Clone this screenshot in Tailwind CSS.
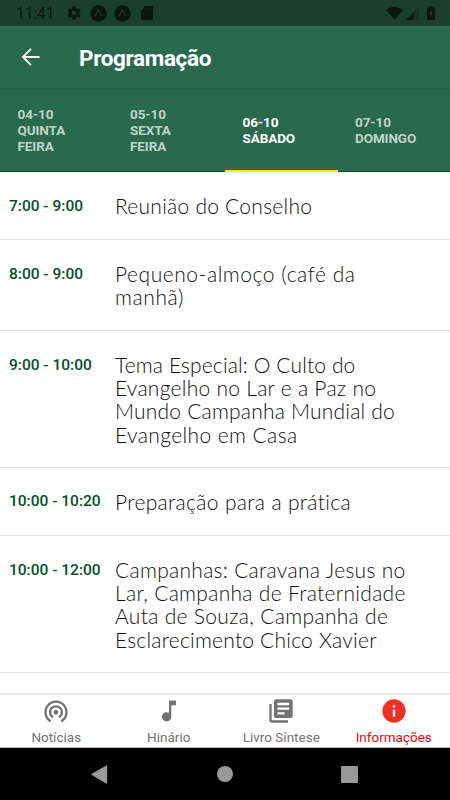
<!DOCTYPE html>
<html lang="pt">
    <head>
        <meta charset="UTF-8">
        <meta name="viewport" content="width=device-width, initial-scale=1.0">
        <title>Programação</title>
        <script src="https://cdn.jsdelivr.net/npm/@tailwindcss/browser@4"></script>
    </head>

    <body class="bg-white font-['Roboto',sans-serif]">
        <div class="w-[450px] h-[800px] flex flex-col overflow-hidden">
            <!-- Status bar -->
            <div class="h-[26px] shrink-0 bg-[#1a3f2f] text-[#08170f] flex items-center pl-4 pr-[15px]">
                <span class="text-[16px] leading-none tracking-[-0.3px] w-[50px] pt-[2px]">11:41</span>
                <svg class="w-4 h-4" viewBox="0 0 24 24" fill="currentColor"><path d="M19.43 12.98c.04-.32.07-.64.07-.98s-.03-.66-.07-.98l2.11-1.65c.19-.15.24-.42.12-.64l-2-3.46c-.12-.22-.39-.3-.61-.22l-2.49 1c-.52-.4-1.08-.73-1.69-.98l-.38-2.65A.49.49 0 0 0 14 2h-4c-.25 0-.46.18-.49.42l-.38 2.65c-.61.25-1.17.59-1.69.98l-2.49-1c-.23-.09-.49 0-.61.22l-2 3.46c-.13.22-.07.49.12.64l2.11 1.65c-.04.32-.07.65-.07.98s.03.66.07.98l-2.11 1.65c-.19.15-.24.42-.12.64l2 3.46c.12.22.39.3.61.22l2.49-1c.52.4 1.08.73 1.69.98l.38 2.65c.03.24.24.42.49.42h4c.25 0 .46-.18.49-.42l.38-2.65c.61-.25 1.17-.59 1.69-.98l2.49 1c.23.09.49 0 .61-.22l2-3.46c.12-.22.07-.49-.12-.64zM12 15.5a3.5 3.5 0 1 1 0-7 3.5 3.5 0 0 1 0 7z"/></svg>
                <svg class="w-[17px] h-[17px] ml-2" viewBox="0 0 17 17"><circle cx="8.5" cy="8.5" r="8.3" fill="currentColor"/><path d="M5.2 11.3 7.9 5.6h1.2l2.7 5.7" fill="none" stroke="#1a3f2f" stroke-width="1.2"/></svg>
                <svg class="w-[17px] h-[17px] ml-[7px]" viewBox="0 0 17 17"><circle cx="8.5" cy="8.5" r="8.3" fill="currentColor"/><path d="M5.2 11.3 7.9 5.6h1.2l2.7 5.7" fill="none" stroke="#1a3f2f" stroke-width="1.2"/></svg>
                <svg class="w-[12px] h-[14px] ml-[10px]" viewBox="0 0 12 14"><path d="M4.2 0H10.6Q12 0 12 1.4V12.6Q12 14 10.6 14H1.4Q0 14 0 12.6V4.2Z" fill="currentColor"/><path d="M4.6 2v2.4M6.8 2v2.4M9 2v2.4" stroke="#1a3f2f" stroke-width=".6"/></svg>
                <svg class="w-[17px] h-[13px] ml-auto" viewBox="0 0 17 13"><path d="M0 3C5-1 12-1 17 3L8.5 13Z" fill="currentColor"/></svg>
                <svg class="w-[13px] h-[13px] ml-[3px] mt-px" viewBox="0 0 13 13"><path d="M13 0v13H0Z" fill="#143126"/><path d="M7.5 5.5V13H0Z" fill="currentColor"/></svg>
                <svg class="w-[8px] h-[14px] ml-[8px]" viewBox="0 0 8 14"><path d="M2.2 0h3.6v1.2H7Q8 1.2 8 2.2V13Q8 14 7 14H1Q0 14 0 13V2.2Q0 1.2 1 1.2h1.2Z" fill="currentColor"/><path d="M4.6 3.5 2 8h1.6v3.5L6 7H4.6Z" fill="#1a3f2f"/></svg>
            </div>

            <!-- App bar -->
            <div class="h-[64px] shrink-0 bg-[#29694f] border-b-2 border-[#266149] flex items-center pl-[19px] text-white">
                <svg class="w-6 h-6" viewBox="0 0 24 24" fill="none" stroke="currentColor" stroke-width="1.8"><path d="M20.5 12H4M12 3.9 3.9 12 12 20.1"/></svg>
                <h1 class="ml-9 text-[22.5px] leading-none font-bold tracking-[-0.35px] pt-[2px]">Programação</h1>
            </div>

            <!-- Day tabs -->
            <div class="h-[82px] shrink-0 bg-[#29694f] border-b border-[#084d22] grid grid-cols-4 text-[13.5px] leading-4 font-bold tracking-[-0.1px] text-[#bfd2ca]">
                <div class="pl-[17.5px] pb-[2px] flex items-center"><span>04-10<br>QUINTA<br>FEIRA</span></div>
                <div class="pl-[17.5px] pb-[2px] flex items-center"><span>05-10<br>SEXTA<br>FEIRA</span></div>
                <div class="relative pl-[17.5px] pb-[2px] flex items-center text-white">
                    <span>06-10<br>SÁBADO</span>
                    <div class="absolute left-0 right-0 -bottom-px h-[2px] bg-[#ffeb1c]"></div>
                </div>
                <div class="pl-[17.5px] pb-[2px] flex items-center"><span>07-10<br>DOMINGO</span></div>
            </div>

            <!-- Schedule -->
            <main class="flex-1 min-h-0 overflow-hidden border-t border-[#f2f2f2] bg-white">
                <div class="-mt-[1.2px] flex pt-[22px] pb-[21.5px] border-b border-[#e3e3e3]">
                    <div class="w-[115px] pl-[9px] pt-px -mb-px shrink-0 text-[15.5px] leading-[23.2px] font-medium text-[#06502a]">7:00 - 9:00</div>
                    <div class="font-['Lato',sans-serif] font-light text-[21px] leading-[23.2px] text-[#111] whitespace-nowrap">
                        <p class="tracking-[0.25px]">Reunião do Conselho</p>
                    </div>
                </div>
                <div class="flex pt-[22px] pb-[22px] border-b border-[#e3e3e3]">
                    <div class="w-[115px] pl-[9px] pt-px shrink-0 text-[15.5px] leading-[23.2px] font-medium text-[#06502a]">8:00 - 9:00</div>
                    <div class="font-['Lato',sans-serif] font-light text-[21px] leading-[23.2px] text-[#111] whitespace-nowrap">
                        <p class="tracking-[0.55px]">Pequeno-almoço (café da</p>
                        <p class="tracking-[0.6px]">manhã)</p>
                    </div>
                </div>
                <div class="flex pt-[22px] pb-[21.5px] border-b border-[#e3e3e3]">
                    <div class="w-[115px] pl-[9px] pt-px shrink-0 text-[15.5px] leading-[23.2px] font-medium text-[#06502a]">9:00 - 10:00</div>
                    <div class="font-['Lato',sans-serif] font-light text-[21px] leading-[23.2px] text-[#111] whitespace-nowrap">
                        <p class="tracking-[0.13px]">Tema Especial: O Culto do</p>
                        <p class="tracking-[0.27px]">Evangelho no Lar e a Paz no</p>
                        <p class="tracking-[0.2px]">Mundo Campanha Mundial do</p>
                        <p class="tracking-[0.4px]">Evangelho em Casa</p>
                    </div>
                </div>
                <div class="flex pt-[22px] pb-[21.5px] border-b border-[#e3e3e3]">
                    <div class="w-[115px] pl-[9px] shrink-0 text-[15.5px] leading-[23.2px] font-medium text-[#06502a]">10:00 - 10:20</div>
                    <div class="font-['Lato',sans-serif] font-light text-[21px] leading-[23.2px] text-[#111] whitespace-nowrap">
                        <p class="tracking-[0.33px]">Preparação para a prática</p>
                    </div>
                </div>
                <div class="flex pt-[22px] pb-[21.5px] border-b border-[#e3e3e3]">
                    <div class="w-[115px] pl-[9px] pt-px shrink-0 text-[15.5px] leading-[23.2px] font-medium text-[#06502a]">10:00 - 12:00</div>
                    <div class="font-['Lato',sans-serif] font-light text-[21px] leading-[23.2px] text-[#111] whitespace-nowrap">
                        <p class="tracking-[0.29px]">Campanhas: Caravana Jesus no</p>
                        <p class="tracking-[0.3px]">Lar, Campanha de Fraternidade</p>
                        <p class="tracking-[0.32px]">Auta de Souza, Campanha de</p>
                        <p class="tracking-[0.22px]">Esclarecimento Chico Xavier</p>
                    </div>
                </div>
            </main>

            <!-- Bottom navigation -->
            <nav class="h-[55px] shrink-0 border-t-2 border-[#e9e9e9] border-b border-b-[#b5b5b5] bg-white grid grid-cols-4 text-[13.5px] leading-4 text-[#737373]">
                <div class="flex flex-col items-center pt-[2px]">
                    <svg class="w-7 h-7" viewBox="0 0 24 24" fill="currentColor"><path d="M12 11c-1.100 0-2 .9-2 2s.9 2 2 2 2-.9 2-2-.9-2-2-2zm6 2c0-3.310-2.690-6-6-6s-6 2.690-6 6c0 2.220 1.210 4.150 3 5.190l1-1.740c-1.190-.7-2-1.970-2-3.450 0-2.210 1.790-4 4-4s4 1.790 4 4c0 1.480-.81 2.750-2 3.450l1 1.740c1.790-1.040 3-2.970 3-5.190zM12 3C6.480 3 2 7.480 2 13c0 3.700 2.010 6.920 4.990 8.650l1-1.730C5.610 18.530 4 15.960 4 13c0-4.420 3.580-8 8-8s8 3.580 8 8c0 2.960-1.610 5.530-4 6.920l1 1.730c2.990-1.730 5-4.950 5-8.650 0-5.520-4.480-10-10-10z"/></svg>
                    <span class="mt-[4px]">Notícias</span>
                </div>
                <div class="flex flex-col items-center pt-[2px]">
                    <svg class="w-7 h-7" viewBox="0 0 24 24" fill="currentColor"><path d="M12 3v10.550c-.59-.34-1.270-.55-2-.55-2.210 0-4 1.790-4 4s1.790 4 4 4 4-1.790 4-4V7h4V3h-6z"/></svg>
                    <span class="mt-[4px]">Hinário</span>
                </div>
                <div class="flex flex-col items-center pt-[2px]">
                    <svg class="w-7 h-7" viewBox="0 0 24 24" fill="currentColor"><path d="M4 6H2v14c0 1.100.9 2 2 2h14v-2H4V6zm16-4H8c-1.100 0-2 .9-2 2v12c0 1.100.9 2 2 2h12c1.100 0 2-.9 2-2V4c0-1.100-.9-2-2-2zm-1 9H9V9h10v2zm-4 4H9v-2h6v2zm4-8H9V5h10v2z"/></svg>
                    <span class="mt-[4px]">Livro Síntese</span>
                </div>
                <div class="flex flex-col items-center pt-[2px] text-[#ed3124]">
                    <svg class="w-7 h-7" viewBox="0 0 24 24" fill="currentColor"><path d="M12 2C6.480 2 2 6.480 2 12s4.480 10 10 10 10-4.480 10-10S17.520 2 12 2zm1 15h-2v-6h2v6zm0-8h-2V7h2v2z"/></svg>
                    <span class="mt-[4px] text-[#e80c0c]">Informações</span>
                </div>
            </nav>

            <!-- System navigation -->
            <div class="h-[52px] shrink-0 bg-black flex items-center text-[#999]">
                <svg class="w-[17px] h-[19px] ml-[91px]" viewBox="0 0 17 19" fill="currentColor"><path d="M15.200.4Q16.200 0 16.200 1V18Q16.200 19 15.200 18.500L.8 10Q0 9.400.8 8.800Z"/></svg>
                <div class="w-4 h-4 ml-[109px] rounded-full bg-[#999]"></div>
                <div class="w-[17px] h-[17px] ml-[108px] rounded-[1px] bg-[#999]"></div>
            </div>
        </div>
    </body>
</html>
